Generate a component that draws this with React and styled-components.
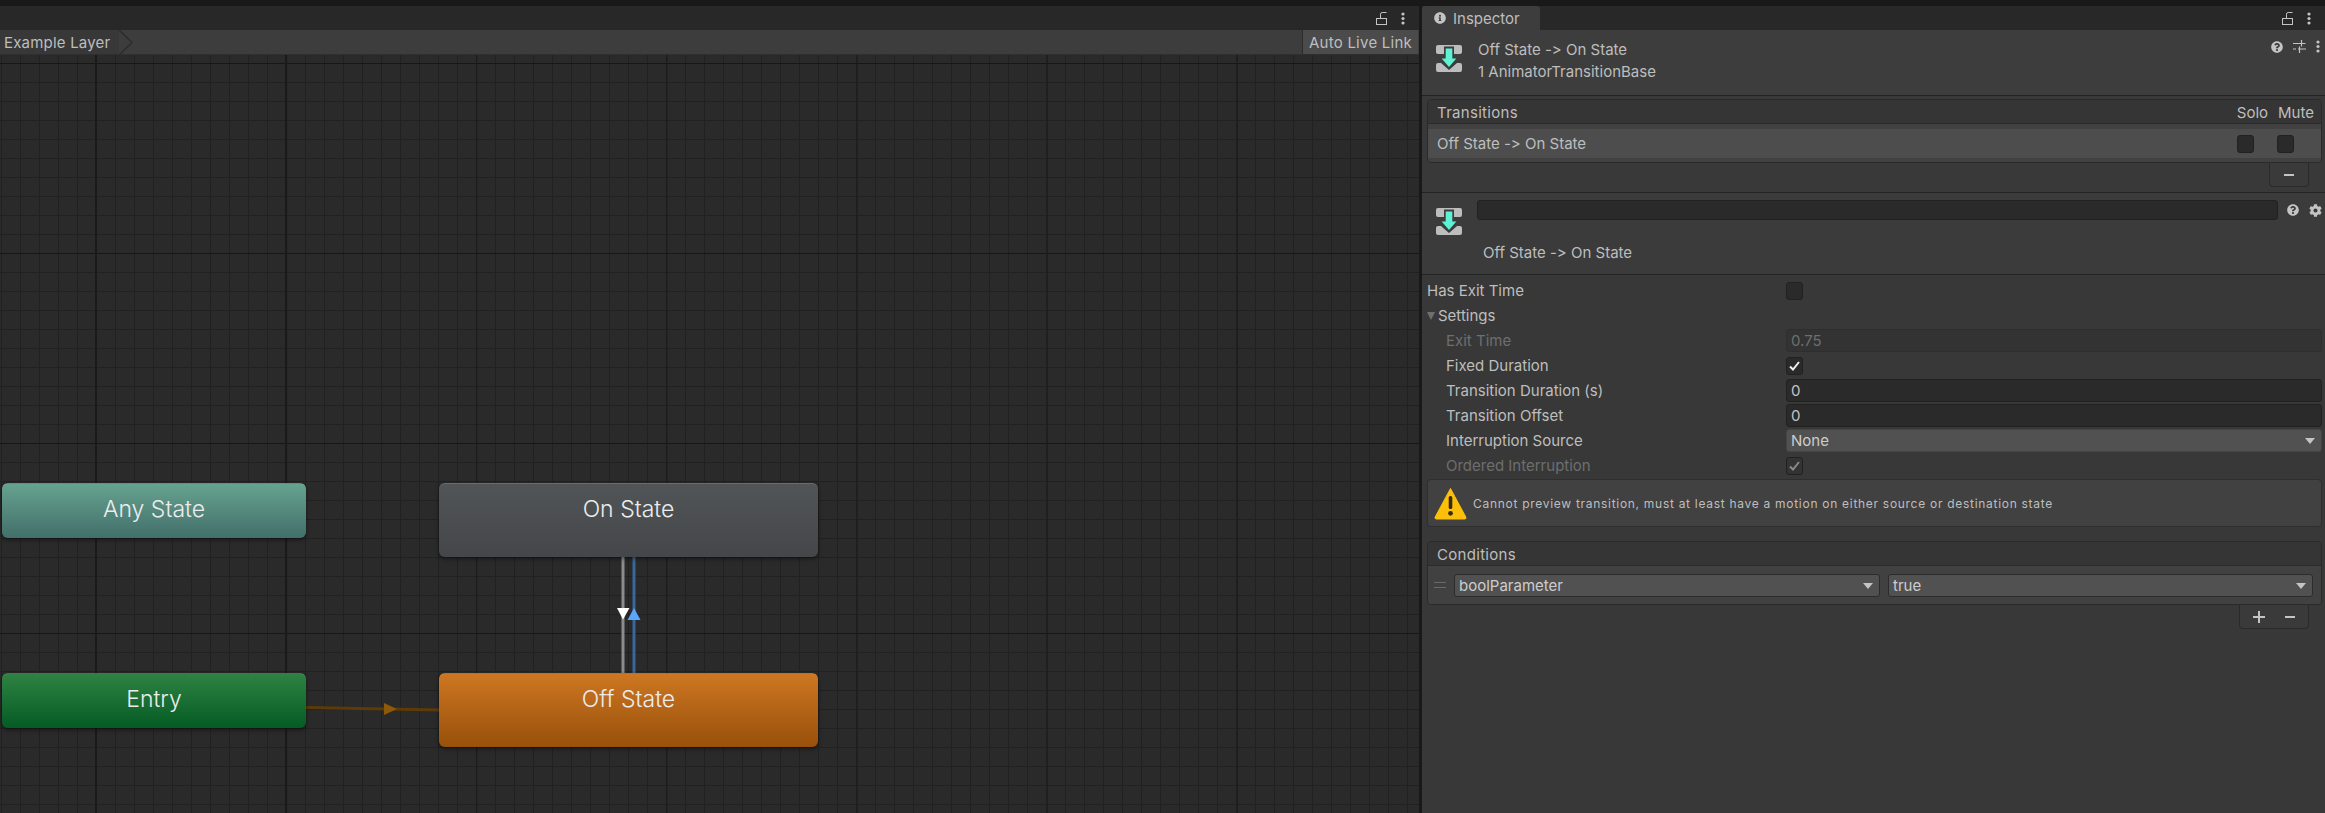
import React from "react";
import styled, { createGlobalStyle } from "styled-components";
import { FaCog, FaInfoCircle, FaQuestionCircle } from "react-icons/fa";

const GlobalStyle = createGlobalStyle`
  html, body {
    margin: 0;
    padding: 0;
    background: #191919;
    overflow: hidden;
  }
  * {
    box-sizing: border-box;
  }
`;

// small drawings
const LockIcon = () => (
  <svg width="11" height="13" viewBox="0 0 11 13" fill="none" stroke="#c4c4c4" strokeWidth="1">
    <rect x="0.5" y="6.5" width="10" height="6" />
    <path d="M4.5 6V2.2Q4.5 .5 6.2 .5H10.5" />
  </svg>
);

const DotsIcon = () => (
  <svg width="4" height="13" viewBox="0 0 4 13" fill="#c4c4c4">
    <circle cx="2" cy="2" r="1.6" />
    <circle cx="2" cy="6.5" r="1.6" />
    <circle cx="2" cy="11" r="1.6" />
  </svg>
);

const SlidersIcon = () => (
  <svg width="13" height="13" viewBox="0 0 13 13" stroke="#c4c4c4" strokeWidth="1.2" fill="none">
    <path d="M0 3.5h12.5M8.5 0v6.5" />
    <path d="M0 9h3M5 9h8M6.5 6.5v6.5" />
  </svg>
);

const TransitionIcon = () => (
  <svg width="26" height="27" viewBox="0 0 26 27">
    <rect x="0" y="0" width="26" height="9" rx="2" fill="#bdbdbd" />
    <path d="M0 20a2 2 0 0 1 2-2h3l8 7 8-7h3a2 2 0 0 1 2 2v5a2 2 0 0 1-2 2H2a2 2 0 0 1-2-2z" fill="#bdbdbd" />
    <path d="M8 1.5h10v10h4.5L13 24 3.5 11.5H8z" fill="#3c3c3c" />
    <path d="M9.7 3.5h6.6v10h4L13 22 5.7 13.5h4z" fill="#5df2d3" />
  </svg>
);

const WarningIcon = () => (
  <svg width="33" height="33" viewBox="0 0 33 33">
    <path d="M16.5 1.5 L31.8 30 Q32.6 32 30.6 32 H2.4 Q.4 32 1.2 30 Z" fill="#fdc00a" stroke="#fdc00a" strokeLinejoin="round" />
    <rect x="14.7" y="9" width="3.6" height="13" rx="1.6" fill="#352b10" />
    <circle cx="16.5" cy="26.3" r="2.4" fill="#352b10" />
  </svg>
);

const CheckMark = ({ color }) => (
  <svg width="11" height="10" viewBox="0 0 11 10" fill="none" stroke={color} strokeWidth="2">
    <path d="M1 5.5 4 8.5 10 1" />
  </svg>
);

const ChevronIcon = () => (
  <CrumbArrow width="14" height="25" viewBox="0 0 14 25">
    <polygon points="0,0 13,12.5 0,25" fill="#3d3d3d" />
    <polyline points="0,0 13,12.5 0,25" fill="none" stroke="#2c2c2c" strokeWidth="1.5" />
  </CrumbArrow>
);

function App() {
  return (
    <Page>
      <GlobalStyle />
      <AnimatorPanel>
        <PanelBar>
          <LockIcon />
          <DotsIcon />
        </PanelBar>
        <Breadcrumb>
          <Crumb>
            Example Layer
            <ChevronIcon />
          </Crumb>
          <LiveLink>Auto Live Link</LiveLink>
        </Breadcrumb>
        <Canvas>
          <Transitions width="1419" height="758">
            <line x1="306" y1="652.5" x2="440" y2="655" stroke="#5c3b08" strokeWidth="3" />
            <polygon points="384,648 397,654 384,660" fill="#8c5a08" />
            <rect x="621.5" y="500" width="3" height="120" fill="#8b8b8b" />
            <rect x="632.5" y="500" width="3" height="120" fill="#39679b" />
            <polygon points="617,553 629.5,553 623,564.5" fill="#fff" />
            <polygon points="634,553 640.5,565 627.5,565" fill="#5aa6fb" />
          </Transitions>
          <StateNode $left={2} $top={428} $width={304} $height={55} $from="#66a28f" $to="#426f6a">
            Any State
          </StateNode>
          <StateNode $left={2} $top={618} $width={304} $height={55} $from="#2e8242" $to="#045b24">
            Entry
          </StateNode>
          <StateNode $left={439} $top={428} $width={379} $height={74} $from="#515558" $to="#454649">
            On State
          </StateNode>
          <StateNode $left={439} $top={618} $width={379} $height={74} $from="#cd7722" $to="#98500b">
            Off State
          </StateNode>
        </Canvas>
      </AnimatorPanel>

      <Inspector>
        <TabBar>
          <Tab>
            <FaInfoCircle size={12} color="#c4c4c4" />
            Inspector
          </Tab>
          <TabActions>
            <LockIcon />
            <DotsIcon />
          </TabActions>
        </TabBar>

        <TitleSection>
          <TransitionIcon />
          <TitleText>
            <div>Off State -&gt; On State</div>
            <div>1 AnimatorTransitionBase</div>
          </TitleText>
          <TitleActions>
            <FaQuestionCircle size={12} color="#c4c4c4" />
            <SlidersIcon />
            <DotsIcon />
          </TitleActions>
        </TitleSection>

        <ListSection>
          <ListBox>
            <ListHeader>
              Transitions
              <HeaderColumns>
                <span>Solo</span>
                <span>Mute</span>
              </HeaderColumns>
            </ListHeader>
            <ListBody>
              <TransitionRow>
                Off State -&gt; On State
                <RowChecks>
                  <CheckBox />
                  <CheckBox />
                </RowChecks>
              </TransitionRow>
            </ListBody>
          </ListBox>
          <ListFooter $width={40}>
            <Minus />
          </ListFooter>
        </ListSection>

        <DetailSection>
          <DetailTop>
            <TransitionIcon />
            <NameField />
            <DetailActions>
              <FaQuestionCircle size={12} color="#c4c4c4" />
              <FaCog size={13} color="#c4c4c4" />
            </DetailActions>
          </DetailTop>
          <DetailName>Off State -&gt; On State</DetailName>
        </DetailSection>

        <Settings>
          <PropRow>
            <PropLabel>Has Exit Time</PropLabel>
            <CheckBox />
          </PropRow>
          <PropRow>
            <Foldout>Settings</Foldout>
          </PropRow>
          <PropRow>
            <PropLabel $indent $muted>
              Exit Time
            </PropLabel>
            <ValueField $muted>0.75</ValueField>
          </PropRow>
          <PropRow>
            <PropLabel $indent>Fixed Duration</PropLabel>
            <CheckBox>
              <CheckMark color="#f0f0f0" />
            </CheckBox>
          </PropRow>
          <PropRow>
            <PropLabel $indent>Transition Duration (s)</PropLabel>
            <ValueField>0</ValueField>
          </PropRow>
          <PropRow>
            <PropLabel $indent>Transition Offset</PropLabel>
            <ValueField>0</ValueField>
          </PropRow>
          <PropRow>
            <PropLabel $indent>Interruption Source</PropLabel>
            <Popup>None</Popup>
          </PropRow>
          <PropRow>
            <PropLabel $indent $muted>
              Ordered Interruption
            </PropLabel>
            <CheckBox $muted>
              <CheckMark color="#8a8a8a" />
            </CheckBox>
          </PropRow>
        </Settings>

        <WarningBox>
          <WarningIcon />
          Cannot preview transition, must at least have a motion on either source or destination state
        </WarningBox>

        <ConditionsBox>
          <ListHeader>Conditions</ListHeader>
          <ConditionRow>
            <DragHandle />
            <Popup $outlined>boolParameter</Popup>
            <Popup $outlined>true</Popup>
          </ConditionRow>
        </ConditionsBox>
        <ListFooter $width={70}>
          <Plus />
          <Minus />
        </ListFooter>
      </Inspector>
    </Page>
  );
}

const Page = styled.div`
  display: grid;
  grid-template-columns: 1419px 1fr;
  column-gap: 3px;
  width: 2325px;
  height: 813px;
  padding-top: 6px;
  background: #191919;
  font-family: Inter, "Noto Sans", sans-serif;
  font-size: 15px;
  font-variant-ligatures: none;
  font-feature-settings: "calt" 0;
  color: #bebebe;
  overflow: hidden;
`;

const AnimatorPanel = styled.div`
  display: flex;
  flex-direction: column;
  min-height: 0;
`;

const PanelBar = styled.div`
  display: flex;
  align-items: center;
  justify-content: flex-end;
  gap: 14px;
  height: 24px;
  padding-right: 14px;
  background: #282828;
`;

const Breadcrumb = styled.div`
  display: flex;
  justify-content: space-between;
  height: 25px;
  background: #3d3d3d;
  border-bottom: 1px solid #2f2f2f;
`;

const Crumb = styled.div`
  position: relative;
  display: flex;
  align-items: center;
  width: 119px;
  padding-left: 4px;
  letter-spacing: 0.2px;
  background: #383838;
`;

const CrumbArrow = styled.svg`
  position: absolute;
  top: 0;
  left: 119px;
`;

const LiveLink = styled.div`
  display: flex;
  align-items: center;
  justify-content: center;
  width: 116px;
  margin-right: 1px;
  letter-spacing: 0.25px;
  background: #4b4b4b;
  border-left: 1px solid #2c2c2c;
`;

const Canvas = styled.div`
  position: relative;
  flex: 1;
  background-color: #2a2a2a;
  background-image:
    linear-gradient(#1a1a1a, #1a1a1a),
    linear-gradient(#1a1a1a, #1a1a1a),
    linear-gradient(90deg, #1a1a1a 1px, transparent 1px),
    linear-gradient(#171717 1px, transparent 1px),
    linear-gradient(90deg, #212121 1px, transparent 1px),
    linear-gradient(#212121 1px, transparent 1px);
  background-size:
    2px 100%,
    2px 100%,
    190.15px 100%,
    100% 190px,
    19.015px 100%,
    100% 19px;
  background-position:
    95px 0,
    285px 0,
    96px 0,
    0 8px,
    1px 0,
    0 8px;
  background-repeat: no-repeat, no-repeat, repeat, repeat, repeat, repeat;
`;

const Transitions = styled.svg`
  position: absolute;
  top: 0;
  left: 0;
`;

const StateNode = styled.div`
  position: absolute;
  left: ${(p) => p.$left}px;
  top: ${(p) => p.$top}px;
  width: ${(p) => p.$width}px;
  height: ${(p) => p.$height}px;
  padding-top: 10px;
  font-size: 23px;
  font-weight: 300;
  line-height: 30px;
  text-align: center;
  color: #ececec;
  border-radius: 6px;
  border-top: 1px solid rgba(255, 255, 255, 0.2);
  background: linear-gradient(${(p) => p.$from}, ${(p) => p.$to});
  box-shadow: 0 2px 4px rgba(0, 0, 0, 0.45);
`;

const Inspector = styled.div`
  display: flex;
  flex-direction: column;
  min-height: 0;
  background: #383838;
`;

const TabBar = styled.div`
  display: flex;
  justify-content: space-between;
  height: 24px;
  background: #282828;
`;

const Tab = styled.div`
  display: flex;
  align-items: center;
  gap: 7px;
  width: 118px;
  padding-left: 12px;
  background: #3d3d3d;
  border-radius: 3px 3px 0 0;
`;

const TabActions = styled.div`
  display: flex;
  align-items: center;
  gap: 14px;
  padding-right: 14px;
`;

const TitleSection = styled.div`
  display: flex;
  height: 66px;
  padding: 15px 0 0 14px;
  background: #3d3d3d;
  border-bottom: 1px solid #232323;
`;

const TitleText = styled.div`
  display: flex;
  flex-direction: column;
  gap: 4px;
  margin: -4px 0 0 16px;
  line-height: 18px;
`;

const TitleActions = styled.div`
  display: flex;
  align-items: center;
  align-self: flex-start;
  gap: 10px;
  height: 13px;
  margin-left: auto;
  padding-right: 5px;
  margin-top: -5px;
`;

const ListSection = styled.div`
  display: flex;
  flex-direction: column;
  height: 97px;
  padding-top: 3px;
  background: #393939;
  border-bottom: 1px solid #232323;
`;

const ListBox = styled.div`
  margin: 0 3px 0 5px;
  border: 1px solid #2a2a2a;
  border-radius: 4px;
  overflow: hidden;
`;

const ListHeader = styled.div`
  display: flex;
  align-items: center;
  justify-content: space-between;
  height: 24px;
  padding: 2px 0 0 9px;
  letter-spacing: 0.3px;
  background: #353535;
  border-bottom: 1px solid #2a2a2a;
`;

const HeaderColumns = styled.div`
  display: flex;
  gap: 10px;
  padding-right: 7px;
  letter-spacing: 0;
`;

const ListBody = styled.div`
  padding: 5px 0 4px;
  background: #414141;
`;

const TransitionRow = styled.div`
  display: flex;
  align-items: center;
  justify-content: space-between;
  height: 29px;
  padding-left: 9px;
  background: #4d4d4d;
`;

const RowChecks = styled.div`
  display: flex;
  gap: 23px;
  padding-right: 27px;
`;

const CheckBox = styled.div`
  display: flex;
  align-items: center;
  justify-content: center;
  width: 17px;
  height: 18px;
  background: ${(p) => (p.$muted ? "#333333" : "#2a2a2a")};
  border: 1px solid #212121;
  border-radius: 3px;
`;

const ListFooter = styled.div`
  display: flex;
  align-items: center;
  justify-content: center;
  gap: 20px;
  align-self: flex-end;
  flex-shrink: 0;
  width: ${(p) => p.$width}px;
  height: 24px;
  margin-right: 16px;
  background: #3a3a3a;
  border: 1px solid #2a2a2a;
  border-top: 0;
  border-radius: 0 0 4px 4px;
`;

const Minus = styled.span`
  width: 10px;
  height: 2px;
  background: #c4c4c4;
`;

const Plus = styled.span`
  position: relative;
  width: 12px;
  height: 2px;
  background: #c4c4c4;
  &::after {
    content: "";
    position: absolute;
    top: -5px;
    left: 5px;
    width: 2px;
    height: 12px;
    background: #c4c4c4;
  }
`;

const DetailSection = styled.div`
  height: 82px;
  padding: 7px 0 0 14px;
  background: #3b3b3b;
  border-bottom: 1px solid #232323;
`;

const DetailTop = styled.div`
  display: flex;
  align-items: flex-start;
  gap: 15px;
  & > svg {
    margin-top: 8px;
  }
`;

const NameField = styled.div`
  flex: 1;
  height: 20px;
  background: #2a2a2a;
  border: 1px solid #212121;
  border-radius: 3px;
`;

const DetailActions = styled.div`
  display: flex;
  align-items: center;
  gap: 10px;
  height: 20px;
  padding-right: 3px;
  margin-left: -6px;
`;

const DetailName = styled.div`
  margin: 9px 0 0 47px;
  line-height: 18px;
`;

const Settings = styled.div`
  display: flex;
  flex-direction: column;
  padding: 3px 3px 1px 5px;
`;

const PropRow = styled.div`
  display: grid;
  grid-template-columns: 359px 1fr;
  align-items: center;
  height: 25px;
`;

const PropLabel = styled.div`
  padding-left: ${(p) => (p.$indent ? "19px" : "0")};
  color: ${(p) => (p.$muted ? "#6e6e6e" : "#bebebe")};
`;

const Foldout = styled.div`
  display: flex;
  align-items: center;
  gap: 3px;
  &::before {
    content: "";
    width: 0;
    height: 0;
    border-left: 4.5px solid transparent;
    border-right: 4.5px solid transparent;
    border-top: 8px solid #6f6f6f;
  }
`;

const ValueField = styled.div`
  display: flex;
  align-items: center;
  height: 23px;
  padding-left: 4px;
  color: ${(p) => (p.$muted ? "#6e6e6e" : "#c4c4c4")};
  background: ${(p) => (p.$muted ? "#333333" : "#2a2a2a")};
  border: 1px solid ${(p) => (p.$muted ? "#2e2e2e" : "#212121")};
  border-radius: 3px;
`;

const Popup = styled.div`
  position: relative;
  display: flex;
  align-items: center;
  height: 23px;
  padding-left: 4px;
  color: #cdcdcd;
  background: #515151;
  border: 1px solid ${(p) => (p.$outlined ? "#2c2c2c" : "#444444")};
  border-radius: 3px;
  &::after {
    content: "";
    position: absolute;
    top: 8px;
    right: 6px;
    border-left: 5px solid transparent;
    border-right: 5px solid transparent;
    border-top: 6px solid #c4c4c4;
  }
`;

const WarningBox = styled.div`
  display: flex;
  align-items: center;
  gap: 6px;
  height: 48px;
  margin: 0 3px 0 5px;
  padding-left: 6px;
  font-size: 12px;
  letter-spacing: 0.71px;
  background: #414141;
  border: 1px solid #2e2e2e;
  border-radius: 4px;
`;

const ConditionsBox = styled(ListBox)`
  margin: 14px 3px 0 5px;
  flex-shrink: 0;
`;

const ConditionRow = styled.div`
  display: grid;
  grid-template-columns: 12px 426px 1fr;
  column-gap: 8px;
  align-items: center;
  height: 38px;
  padding: 0 8px 0 6px;
  background: #414141;
`;

const DragHandle = styled.span`
  height: 6px;
  border-top: 1px solid #6b6b6b;
  border-bottom: 1px solid #6b6b6b;
`;

export default App;
